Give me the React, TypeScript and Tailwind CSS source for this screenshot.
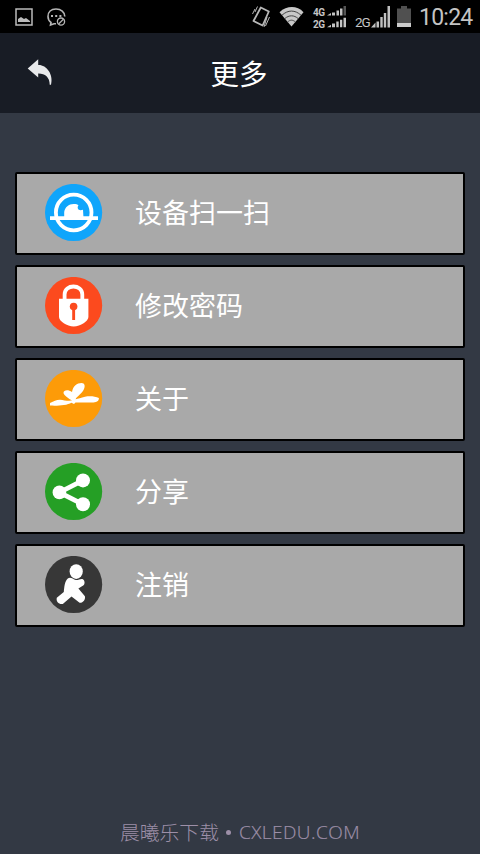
import type { ReactNode } from 'react';

function StatusBar() {
  return (
    <header className="flex h-[33px] shrink-0 items-start bg-black font-['Roboto',sans-serif] text-[#c4c4c4]">
      <svg className="mt-2 ml-[15px]" width="18" height="18" fill="none">
        <path d="M1 1H17V17H1Z" stroke="#bbb" strokeWidth="1.5" />
        <path d="M3 14V11L6 9L9 11L11 10L15 13V14Z" fill="#bbb" />
      </svg>
      <svg className="mt-[7px] ml-[13px]" width="22" height="20" fill="none" stroke="#b5b5b5" strokeWidth="1.6">
        <path d="M18.8 9.5C18.8 5 15 2 10 2S2 5 2 9.5C2 12 3 14 5 15.5L4.5 18L8 16.8H10" />
        <circle cx="15" cy="14.6" r="3.6" strokeWidth="1.3" />
        <path d="M12.6 17L17.4 12.2" strokeWidth="1.3" />
        <path d="M5 9H7M9.2 9H11.2M13.4 9H15.4" strokeWidth="2.2" />
      </svg>
      <svg className="mt-[5px] ml-[182px]" width="22" height="24" fill="none" stroke="#b8b8b8">
        <path d="M10.8 2.5L18.8 6.5L12.6 20.5L3.5 16Z" strokeWidth="1.8" strokeLinejoin="round" />
        <path d="M5 4L2.5 9M7.5 1.5L5 7M19.5 12L15.5 21M17 12L14 22" strokeWidth="1" />
      </svg>
      <svg className="mt-[6px] ml-[7px]" width="26" height="22" fill="none">
        <path d="M.5 6.2C8 -.6 18 -.6 24.5 6.2L12.5 20.5Z" fill="#c8c8c8" />
        <path d="M3 9.2C9 3.7 16 3.7 22 9.2M5.8 12.6C10 8.9 15 8.9 19.2 12.6M8.6 16C11.2 13.6 13.8 13.6 16.4 16" stroke="#444" strokeWidth="1" />
      </svg>
      <div className="mt-[7px] ml-[8px] flex w-[11px] flex-col text-[10px] leading-[11.5px] font-bold tracking-[-0.5px]">
        <span>4G</span>
        <span>2G</span>
      </div>
      <svg className="mt-[6px] ml-[2px]" width="21" height="22" fill="#c4c4c4">
        <path d="M1 9.5L5 7V9.5ZM6 6.5H9V9.5H6ZM10.5 4.5H13V9.5H10.5ZM14 2.5H16.5V9.5H14Z" />
        <path d="M17.5 0H20V9.5H17.5Z" fill="#555" />
        <path d="M1 21.3L5 18.8V21.3ZM6 17.5H9V21.3H6ZM10.3 15.5H12.7V21.3H10.3ZM14 13.7H16.3V21.3H14ZM17.5 11.8H20V21.3H17.5Z" />
      </svg>
      <span className="mt-[14px] ml-[8px] w-[15px] text-[13.5px] leading-[16px] tracking-[-1px]">2G</span>
      <svg className="mt-[6px] ml-px" width="21" height="22" fill="#c0c0c0">
        <path d="M0 21.5L4.5 16.5V21.5ZM5.5 15.5H8V21.5H5.5ZM9.3 11H11.7V21.5H9.3ZM12.8 7H15.2V21.5H12.8ZM16.5 0H19V21.5H16.5Z" />
      </svg>
      <svg className="mt-[6px] ml-[4px]" width="16" height="22">
        <path d="M5 0H11V2.5H15V17H1V2.5H5Z" fill="#505050" />
        <path d="M1 17H15V21H1Z" fill="#ccc" />
      </svg>
      <span className="mt-[4px] ml-[7px] text-[23px] leading-[27px] tracking-[-0.75px]">10:24</span>
    </header>
  );
}

function Disc({ color, children }: { color: string; children: ReactNode }) {
  return (
    <svg width="58" height="58" viewBox="0 0 58 58" fill="none">
      <circle cx="28.6" cy="28.5" r="28.6" fill={color} />
      {children}
    </svg>
  );
}

const items = [
  {
    label: '设备扫一扫',
    icon: (
      <Disc color="#0fa5fb">
        <circle cx="28.7" cy="28.5" r="17.8" stroke="white" strokeWidth="3.8" />
        <path d="M5 32.2H53V36H5Z" fill="white" />
        <path d="M19.2 34V28C20 23 24 19.8 29 20C31 20 32.7 20.5 33.5 21.3C31.5 24 33.3 27.6 38 25.8L38.5 34Z" fill="white" />
      </Disc>
    ),
  },
  {
    label: '修改密码',
    icon: (
      <Disc color="#fc4a1e">
        <path d="M19.6 23V17.5C19.6 6.8 37.3 6.8 37.3 17.5V23" stroke="white" strokeWidth="3.8" />
        <path d="M14 21.8H43.4V40C43.4 44 35.5 49.4 28.7 49.4S14 44 14 40Z" fill="white" />
        <circle cx="28.6" cy="29.6" r="3.8" fill="#fc4a1e" />
        <path d="M27.2 31H30.1V43H27.2Z" fill="#fc4a1e" />
      </Disc>
    ),
  },
  {
    label: '关于',
    icon: (
      <Disc color="#fd9b08">
        <path
          d="M5 33C9 31.2 11 29.7 15 29.7C19 30.2 22 31 27 30.6C24 28.5 19 25.6 18.5 23C18.5 20 23 19.2 27 22C28 16 32 13 36.5 13C40 13 40.2 16.5 39 19C37 24 32 26 30.6 29.2C33 28.9 36 27.6 40 26.7C45 25.8 50 26.3 53.9 28C54 31.7 51 32.4 47 32.6L30.5 32.4L29 34L26.5 32.8C22 35.5 12 36 5 35.6Z"
          fill="white"
        />
      </Disc>
    ),
  },
  {
    label: '分享',
    icon: (
      <Disc color="#259f25">
        <path d="M38 17.4L14.4 29.4L38 41.4" stroke="white" strokeWidth="4.8" />
        <circle cx="14.4" cy="29.4" r="6.8" fill="white" />
        <circle cx="38" cy="17.4" r="7" fill="white" />
        <circle cx="38" cy="41.3" r="7" fill="white" />
      </Disc>
    ),
  },
  {
    label: '注销',
    icon: (
      <Disc color="#373737">
        <ellipse cx="31.2" cy="15.6" rx="6.6" ry="7.4" fill="white" />
        <path
          d="M22.8 22.5C25 20.5 28 22.5 30 23.8C32.5 25 35.5 22.3 37.8 23.2C40 24.6 40.2 28 38.2 29.5L33.4 32.6L39.9 40.2C40.8 43.5 37.8 47.2 34.6 46.8L26.5 40.6L17.8 48C14 48.8 10.8 45.5 11.8 41.8L18.8 36C19.4 31 19.5 25.5 22.8 22.5Z"
          fill="white"
        />
      </Disc>
    ),
  },
];

export default function App() {
  return (
    <div className="flex h-[854px] w-[480px] flex-col overflow-hidden bg-[#333944] font-['Noto_Sans_CJK_SC',sans-serif]">
      <StatusBar />
      <div className="grid h-20 shrink-0 grid-cols-[1fr_auto_1fr] items-start bg-[#181c25]">
        <svg className="mt-[25px] ml-[26px]" width="28" height="28">
          <path
            d="M1.7 10.5L12.2 1.2V7C20 6.5 27.8 16 25 26.7H23.7C23.8 19 18.7 15.2 12.2 15.4V19.6Z"
            fill="#e8e9eb"
          />
        </svg>
        <h1 className="mt-[19px] mr-[2px] text-[28.5px] leading-[41px] font-normal text-white">更多</h1>
      </div>
      <main className="mt-[59px] flex flex-col gap-[10px] px-[15px]">
        {items.map((item) => (
          <button
            key={item.label}
            className="flex h-[83px] items-start rounded-[2px] border-2 border-black bg-[#a9a9a9] pt-[10px] pl-[28px] text-left"
          >
            {item.icon}
            <span className="mt-[8px] ml-[32px] text-[27px] leading-[40px] text-white">{item.label}</span>
          </button>
        ))}
      </main>
      <footer className="mt-auto flex h-[44px] items-center justify-center gap-[7px] leading-[30px] text-[#9d8fa8]">
        <span className="text-[19.8px] font-light">晨曦乐下载</span>
        <span className="size-[5px] rounded-full bg-[#9d8fa8]" />
        <span className="ml-px font-['Open_Sans','Noto_Sans',sans-serif] text-[19px] font-light tracking-[0.45px] [-webkit-text-stroke:0.2px_#9d8fa8]">CXLEDU.COM</span>
      </footer>
    </div>
  );
}
